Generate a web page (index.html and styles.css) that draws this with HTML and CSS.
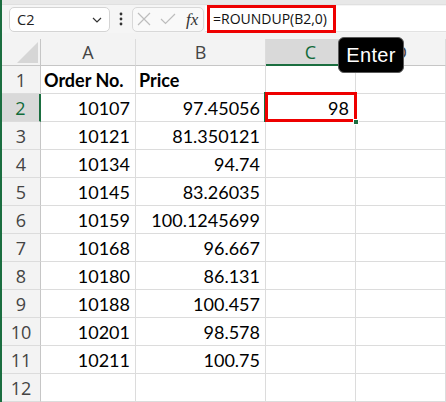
FILE: index.html
```html
<!DOCTYPE html>
<html>
<head>
<meta charset="utf-8">
<link rel="stylesheet" href="styles.css">
</head>
<body>
<div class="app">
  <div class="topstrip"></div>
  <div class="toolbar">
    <div class="namebox">
      <span class="nb-text">C2</span>
      <svg class="chev" width="10" height="6" viewBox="0 0 10 6"><path d="M1 1 L5 5 L9 1" fill="none" stroke="#333" stroke-width="1.2"/></svg>
    </div>
    <div class="dots">
      <svg width="4" height="14" viewBox="0 0 4 14"><circle cx="2" cy="2" r="1.4" fill="#333"/><circle cx="2" cy="7" r="1.4" fill="#333"/><circle cx="2" cy="12" r="1.4" fill="#333"/></svg>
    </div>
    <div class="fxbox">
      <svg class="ic-x" width="14" height="14" viewBox="0 0 14 14"><path d="M1 1 L13 13 M13 1 L1 13" stroke="#bdbdbd" stroke-width="1.2" fill="none"/></svg>
      <svg class="ic-check" width="16" height="12" viewBox="0 0 16 12"><path d="M1 6 L5.5 10.5 L15 1" stroke="#bdbdbd" stroke-width="1.2" fill="none"/></svg>
      <span class="fx">fx</span>
    </div>
    <div class="formula"><span class="redbox">=ROUNDUP(B2,0)</span></div>
  </div>
  <div class="spacer"></div>
  <div class="sheet">
    <div class="ch corner"><svg width="21" height="21" viewBox="0 0 21 21"><polygon points="21,0 21,21 0,21" fill="#d6d6d6"/></svg></div>
    <div class="ch">A</div>
    <div class="ch">B</div>
    <div class="ch sel">C</div>
    <div class="ch">D</div>

    <div class="rh">1</div><div class="c l b">Order No.</div><div class="c l b">Price</div><div class="c"></div><div class="c"></div>
    <div class="rh sel">2</div><div class="c r">10107</div><div class="c r">97.45056</div><div class="c r active">98<span class="selbox"></span><span class="handle"></span></div><div class="c"></div>
    <div class="rh">3</div><div class="c r">10121</div><div class="c r">81.350121</div><div class="c"></div><div class="c"></div>
    <div class="rh">4</div><div class="c r">10134</div><div class="c r">94.74</div><div class="c"></div><div class="c"></div>
    <div class="rh">5</div><div class="c r">10145</div><div class="c r">83.26035</div><div class="c"></div><div class="c"></div>
    <div class="rh">6</div><div class="c r">10159</div><div class="c r">100.1245699</div><div class="c"></div><div class="c"></div>
    <div class="rh">7</div><div class="c r">10168</div><div class="c r">96.667</div><div class="c"></div><div class="c"></div>
    <div class="rh">8</div><div class="c r">10180</div><div class="c r">86.131</div><div class="c"></div><div class="c"></div>
    <div class="rh">9</div><div class="c r">10188</div><div class="c r">100.457</div><div class="c"></div><div class="c"></div>
    <div class="rh">10</div><div class="c r">10201</div><div class="c r">98.578</div><div class="c"></div><div class="c"></div>
    <div class="rh">11</div><div class="c r">10211</div><div class="c r">100.75</div><div class="c"></div><div class="c"></div>
    <div class="rh">12</div><div class="c"></div><div class="c"></div><div class="c"></div><div class="c"></div>
  </div>
  <div class="tooltip">Enter</div>
</div>
</body>
</html>
```

FILE: styles.css
```css
* { box-sizing: border-box; }
html, body { margin: 0; padding: 0; }
body {
  width: 446px;
  height: 402px;
  overflow: hidden;
  background: #fff;
}
.app {
  position: relative;
  width: 446px;
  height: 402px;
  border-left: 2px solid #1b6e40;
  background: #f3f3f3;
  overflow: hidden;
}
.topstrip {
  height: 5px;
  background: #e8e8e8;
  border-bottom: 1px solid #e0e0e0;
}
.toolbar {
  height: 28px;
  display: flex;
  align-items: center;
  background: #f5f5f5;
}
.namebox {
  margin-left: 7px;
  width: 101px;
  height: 25px;
  background: #fff;
  border: 1px solid #d4d4d4;
  border-radius: 5px;
  display: flex;
  align-items: center;
  justify-content: space-between;
  padding: 0 7px 0 7px;
  font-family: "Open Sans", "Noto Sans", sans-serif;
  font-size: 14.5px;
  color: #222;
}
.chev { margin-top: 1px; }
.dots {
  width: 22px;
  display: flex;
  justify-content: center;
  align-items: center;
}
.fxbox {
  width: 72px;
  height: 25px;
  border: 1px solid #d8d8d8;
  border-radius: 5px;
  background: #f9f9f9;
  display: flex;
  align-items: center;
  padding-left: 4px;
}
.ic-check { margin-left: 9px; }
.fx {
  margin-left: 10px;
  font-family: "Liberation Serif", serif;
  font-style: italic;
  font-size: 17px;
  color: #333;
  line-height: 1;
}
.formula {
  flex: 1;
  height: 26px;
  margin-left: 1px;
  background: #fff;
  border-bottom: 1px solid #e2e2e2;
  display: flex;
  align-items: center;
}
.redbox {
  margin-left: 2px;
  height: 28px;
  border: 3px solid #ee0000;
  display: flex;
  align-items: center;
  padding: 0 6px 0 3px;
  font-family: "Open Sans", "Noto Sans", sans-serif;
  font-size: 14px;
  color: #111;
  background: #fff;
}
.spacer { height: 6px; background: #f3f3f3; }
.sheet {
  display: grid;
  grid-template-columns: 39px 95px 130px 90px 1fr;
  grid-template-rows: 27px repeat(12, 28px);
  background: #fff;
}
.ch {
  background: #f3f3f3;
  border-right: 1px solid #dcdcdc;
  border-bottom: 1px solid #c6c6c6;
  display: flex;
  align-items: center;
  justify-content: center;
  font-family: "Open Sans", "Noto Sans", sans-serif;
  font-size: 18px;
  color: #444;
}
.ch.corner {
  justify-content: flex-end;
  align-items: flex-end;
  padding: 0 2px 2px 0;
  border-right: 1px solid #c6c6c6;
}
.ch.sel {
  background: #d9d9d9;
  color: #116b3a;
  border-bottom: 2px solid #1b6e40;
}
.rh {
  background: #f3f3f3;
  border-right: 1px solid #c6c6c6;
  border-bottom: 1px solid #dcdcdc;
  display: flex;
  align-items: center;
  justify-content: center;
  font-family: "Open Sans", "Noto Sans", sans-serif;
  font-size: 18px;
  color: #444;
}
.rh.sel {
  background: #d9d9d9;
  color: #116b3a;
  border-right: 2px solid #1b6e40;
}
.c {
  border-right: 1px solid #dcdcdc;
  border-bottom: 1px solid #dcdcdc;
  display: flex;
  align-items: center;
  font-family: Lato, "Liberation Sans", sans-serif;
  font-size: 18px;
  color: #000;
  white-space: nowrap;
  padding: 1px 5px 0 3px;
}
.c.r { justify-content: flex-end; }
.c.l { justify-content: flex-start; }
.c.b { font-weight: 700; }
.c.active { position: relative; padding-right: 6px; }
.selbox {
  position: absolute;
  left: -1px;
  top: -2px;
  right: -2px;
  bottom: -1px;
  border: 3px solid #ee0000;
  box-shadow: -1px 0 0 #1b6e40;
}
.handle {
  position: absolute;
  right: -4px;
  bottom: -4px;
  width: 6px;
  height: 6px;
  background: #1b6e40;
  border: 1px solid #fff;
}
.tooltip {
  position: absolute;
  left: 336px;
  top: 37px;
  width: 66px;
  height: 36px;
  background: #000;
  border: 1px solid #5a5a5a;
  border-radius: 6px;
  color: #fff;
  font-family: "Liberation Sans", Arial, sans-serif;
  font-size: 20px;
  display: flex;
  align-items: center;
  justify-content: center;
  letter-spacing: 0.3px;
}
```
